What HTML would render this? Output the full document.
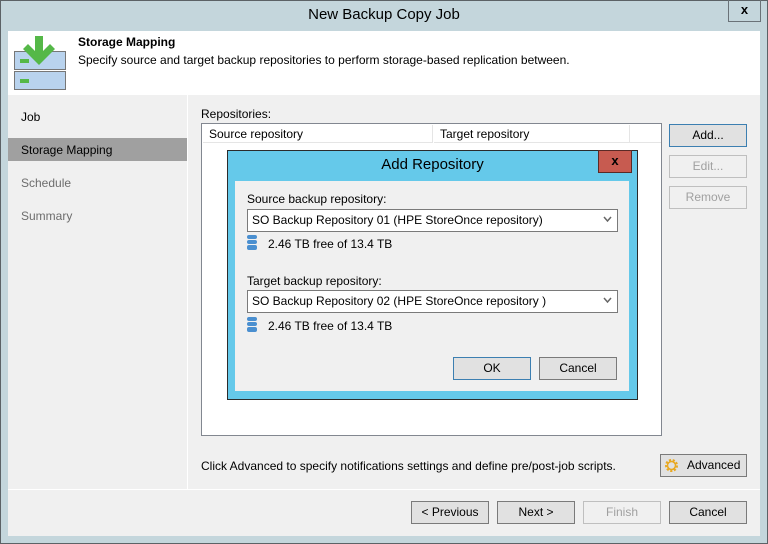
<!DOCTYPE html>
<html><head><meta charset="utf-8"><style>
*{box-sizing:border-box;margin:0;padding:0}
body{width:768px;height:544px;overflow:hidden;font-family:"Liberation Sans",sans-serif;font-size:12px;color:#000;position:relative;background:#c4d6dc}
.a{position:absolute}
.btn{position:absolute;background:#e1e1e1;border:1px solid #adadad;text-align:center;line-height:20px;font-size:12px}
.dis{color:#a0a0a0;background:#f0f0f0;border-color:#bfbfbf}
</style></head><body>
<div class="a" style="left:0;top:0;width:768px;height:544px;border:1px solid #5c6266"></div>
<div class="a" style="left:0;top:6px;width:768px;text-align:center;font-size:15px;color:#000">New Backup Copy Job</div>
<div class="a" style="left:728px;top:0;width:33px;height:22px;border:1px solid #6a7278;border-top:none;text-align:center;font-weight:bold;font-size:13px;line-height:19px">x</div>
<div class="a" style="left:8px;top:31px;width:752px;height:505px;background:#f0f0f0"></div>
<div class="a" style="left:8px;top:31px;width:752px;height:64px;background:#fff"></div>
<svg class="a" style="left:13px;top:36px" width="56" height="54">
<rect x="1.5" y="15.5" width="51" height="18" fill="#b9d3ee" stroke="#777"/>
<rect x="1.5" y="35.5" width="51" height="18" fill="#b9d3ee" stroke="#777"/>
<rect x="7" y="23" width="9" height="4" fill="#55b848"/>
<rect x="7" y="43" width="9" height="4" fill="#55b848"/>
<polygon points="22,0 30,0 30,15 37,8 42,13 26,29 10,13 15,8 22,15" fill="#55b848"/>
</svg>
<div class="a" style="left:78px;top:35px;font-weight:bold">Storage Mapping</div>
<div class="a" style="left:78px;top:53px">Specify source and target backup repositories to perform storage-based replication between.</div>
<div class="a" style="left:187px;top:95px;width:1px;height:394px;background:#fff"></div>
<div class="a" style="left:8px;top:489px;width:752px;height:1px;background:#fff"></div>
<div class="a" style="left:21px;top:110px">Job</div>
<div class="a" style="left:8px;top:138px;width:179px;height:23px;background:#a0a0a0"></div>
<div class="a" style="left:21px;top:143px">Storage Mapping</div>
<div class="a" style="left:21px;top:176px;color:#6d6d6d">Schedule</div>
<div class="a" style="left:21px;top:209px;color:#6d6d6d">Summary</div>
<div class="a" style="left:201px;top:107px">Repositories:</div>
<div class="a" style="left:201px;top:123px;width:461px;height:313px;background:#fff;border:1px solid #828790"></div>
<div class="a" style="left:203px;top:125px;width:230px;height:18px;border-right:1px solid #e5e5e5;border-bottom:1px solid #e5e5e5;padding-left:6px;line-height:18px">Source repository</div>
<div class="a" style="left:434px;top:125px;width:196px;height:18px;border-right:1px solid #e5e5e5;border-bottom:1px solid #e5e5e5;padding-left:6px;line-height:18px">Target repository</div>
<div class="a" style="left:630px;top:125px;width:31px;height:18px;border-bottom:1px solid #e5e5e5"></div>
<div class="btn" style="left:669px;top:124px;width:78px;height:23px;border-color:#3c7fb1">Add...</div>
<div class="btn dis" style="left:669px;top:155px;width:78px;height:23px">Edit...</div>
<div class="btn dis" style="left:669px;top:186px;width:78px;height:23px">Remove</div>
<!-- dialog -->
<div class="a" style="left:227px;top:150px;width:411px;height:250px;background:#65c9ea;border:1px solid #2b2b2b"></div>
<div class="a" style="left:227px;top:156px;width:411px;text-align:center;font-size:15px">Add Repository</div>
<div class="a" style="left:598px;top:150px;width:34px;height:23px;background:#c75b50;border:1px solid #5a2a26;text-align:center;font-weight:bold;font-size:13px;line-height:19px">x</div>
<div class="a" style="left:235px;top:181px;width:394px;height:210px;background:#f0f0f0"></div>
<div class="a" style="left:247px;top:192px">Source backup repository:</div>
<div class="a" style="left:247px;top:209px;width:371px;height:23px;background:#fff;border:1px solid #7a7a7a;padding-left:4px;line-height:21px">SO Backup Repository 01 (HPE StoreOnce repository)</div>
<svg class="a" style="left:603px;top:216px" width="9" height="7"><path d="M1 1 L4.5 5 L8 1" fill="none" stroke="#666" stroke-width="1.5"/></svg>
<svg class="a" style="left:246px;top:235px" width="12" height="16"><g fill="#4a8fd0"><rect x="1" y="0" width="10" height="4" rx="2"/><rect x="1" y="5" width="10" height="4" rx="2"/><rect x="1" y="10" width="10" height="5" rx="2"/></g></svg>
<div class="a" style="left:268px;top:237px">2.46 TB free of 13.4 TB</div>
<div class="a" style="left:247px;top:274px">Target backup repository:</div>
<div class="a" style="left:247px;top:290px;width:371px;height:23px;background:#fff;border:1px solid #7a7a7a;padding-left:4px;line-height:21px">SO Backup Repository 02 (HPE StoreOnce repository )</div>
<svg class="a" style="left:603px;top:297px" width="9" height="7"><path d="M1 1 L4.5 5 L8 1" fill="none" stroke="#666" stroke-width="1.5"/></svg>
<svg class="a" style="left:246px;top:317px" width="12" height="16"><g fill="#4a8fd0"><rect x="1" y="0" width="10" height="4" rx="2"/><rect x="1" y="5" width="10" height="4" rx="2"/><rect x="1" y="10" width="10" height="5" rx="2"/></g></svg>
<div class="a" style="left:268px;top:319px">2.46 TB free of 13.4 TB</div>
<div class="btn" style="left:453px;top:357px;width:78px;height:23px;border-color:#3c7fb1">OK</div>
<div class="btn" style="left:539px;top:357px;width:78px;height:23px;border-color:#7a7a7a">Cancel</div>
<div class="a" style="left:201px;top:459px">Click Advanced to specify notifications settings and define pre/post-job scripts.</div>
<div class="btn" style="left:660px;top:454px;width:87px;height:23px;border-color:#7a7a7a;text-align:left;padding-left:26px">Advanced</div>
<svg class="a" style="left:663px;top:457px" width="17" height="17"><circle cx="8.5" cy="8.5" r="5" fill="none" stroke="#e8a820" stroke-width="3" stroke-dasharray="2 1.5"/><circle cx="8.5" cy="8.5" r="4" fill="none" stroke="#e8a820" stroke-width="1.5"/></svg>
<div class="btn" style="left:411px;top:501px;width:78px;height:23px;border-color:#7a7a7a">&lt; Previous</div>
<div class="btn" style="left:497px;top:501px;width:78px;height:23px;border-color:#7a7a7a">Next &gt;</div>
<div class="btn dis" style="left:583px;top:501px;width:78px;height:23px">Finish</div>
<div class="btn" style="left:669px;top:501px;width:78px;height:23px;border-color:#7a7a7a">Cancel</div>
</body></html>
